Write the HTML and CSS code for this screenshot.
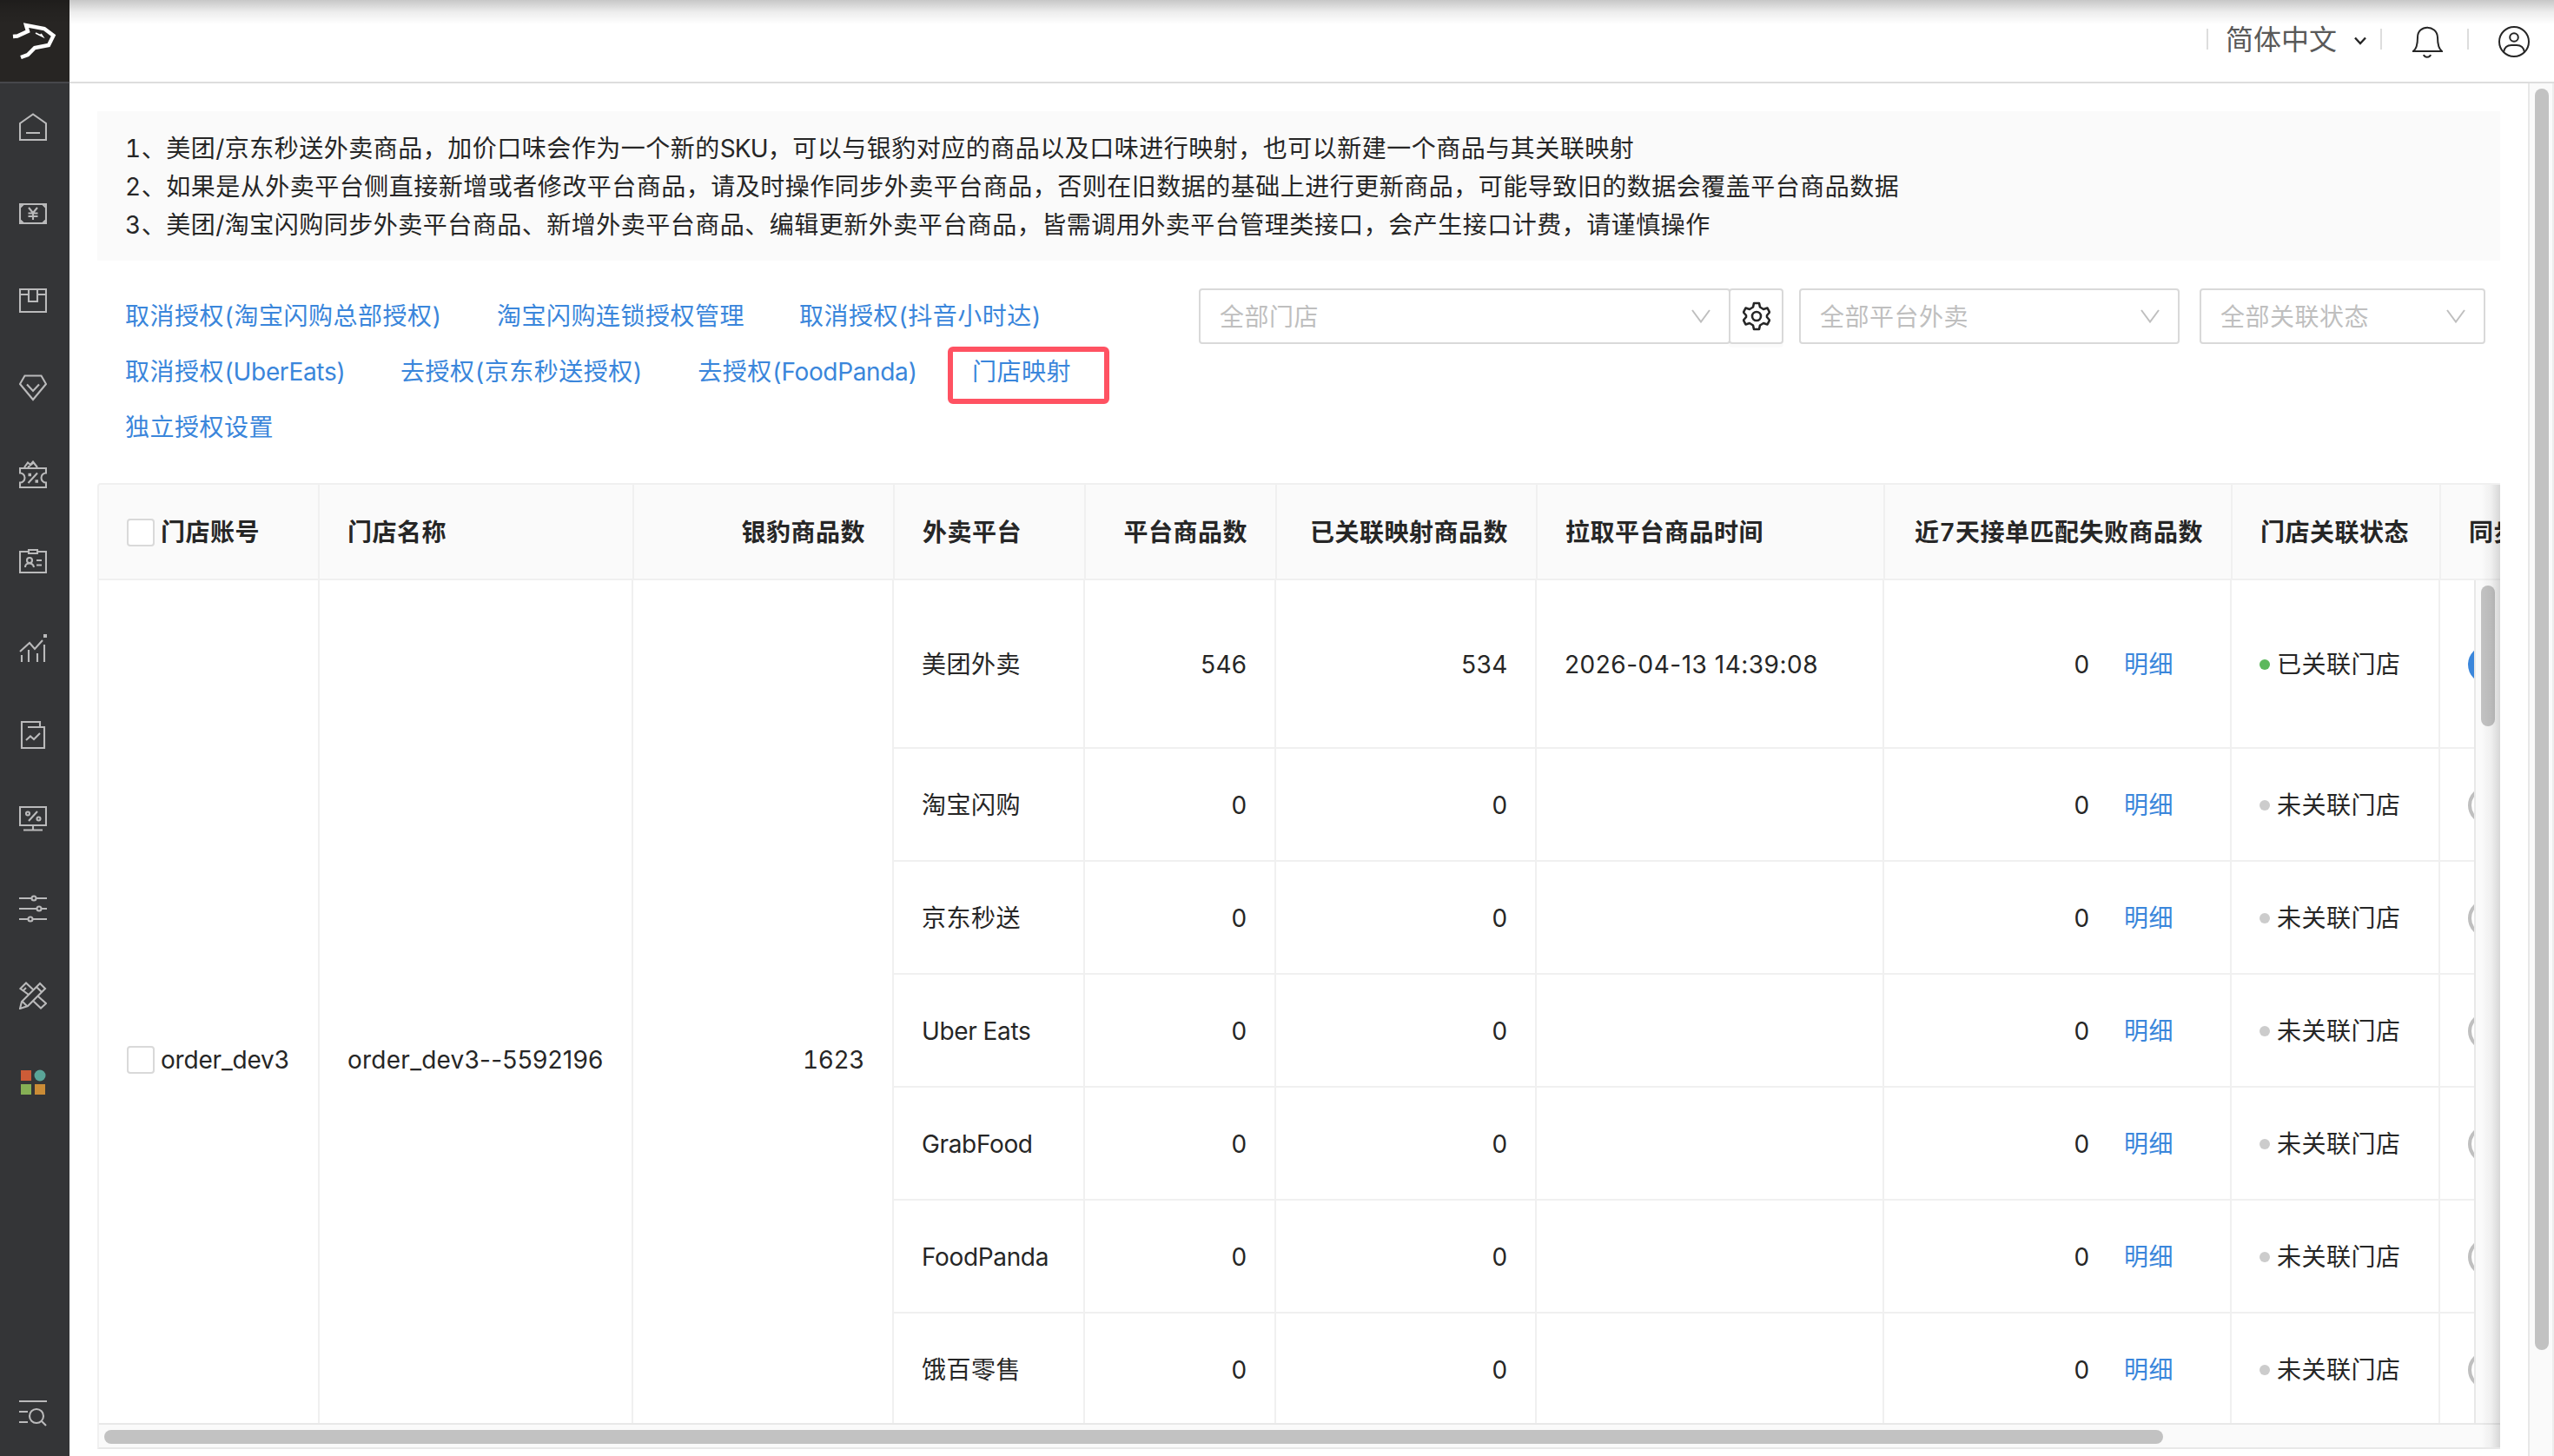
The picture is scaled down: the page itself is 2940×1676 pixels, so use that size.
FILE: index.html
```html
<!DOCTYPE html>
<html lang="zh-CN">
<head>
    <meta charset="UTF-8">
    <meta name="viewport" content="width=device-width, initial-scale=1.0">
    <title>外卖门店映射</title>
    <link rel="stylesheet" href="styles.css">
</head>
<body>
    <div class="top-shade"></div>

    <!-- 侧边栏 -->
    <aside class="sidebar">
        <div class="logo">
            <svg width="52" height="44" viewBox="0 0 52 44" fill="none" stroke="#fff" stroke-width="4.4">
                <path d="M2 18 L7 17.500 L19 12 L17 5 L38 9 L48.500 17 L43 28 L27 31 L19 39 L11 42"/>
                <path d="M28 14 L36 18 L34 15" stroke-width="1.8"/>
            </svg>
        </div>
        <nav class="menu">
            <a class="menu-item"><svg viewBox="0 0 32 32"><path d="M1 31V12L16 1.500 31 12V31ZM8 23H24"/></svg></a>
            <a class="menu-item"><svg viewBox="0 0 32 32"><path d="M1 5H31V27H1ZM1 9 5 5M27 5 31 9M1 23 5 27M27 27 31 23M11 9 16 15 21 9M16 15V23M10.500 15.500H21.500M10.500 19H21.500"/></svg></a>
            <a class="menu-item"><svg viewBox="0 0 32 32"><path d="M1 3H31V29H1ZM1 9H11M21 9H31M11 3V17H21V3"/></svg></a>
            <a class="menu-item"><svg viewBox="0 0 32 32"><path d="M6.500 2.500H25.500L31 12 16 30 1 12ZM9 12.500 16 20 23 12.500"/></svg></a>
            <a class="menu-item"><svg viewBox="0 0 32 32"><path d="M1 9H31V14.500A5 5 0 0 0 31 25.500V31H1V25.500A5 5 0 0 0 1 14.500ZM6 8 10 2.500 13 5 16 1.500 21 8M10 8 16 3M10.500 26 21 14.500"/><path d="M10.500 16.500H14M18.500 24H22" stroke-width="3.500"/></svg></a>
            <a class="menu-item"><svg viewBox="0 0 32 32"><path d="M11 5H1V29H31V5H21M11 3H21V7H11ZM7 23C7 17 16 17 17 23M20 15H26M20 20.500H26"/><circle cx="12" cy="15" r="3"/></svg></a>
            <a class="menu-item"><svg viewBox="0 0 32 32"><path d="M1 20 12 10 18 17 27 7M3 24V32M11 18V32M21 22V32M29 12V32"/><path d="M28 2H32" stroke-width="4"/></svg></a>
            <a class="menu-item"><svg viewBox="0 0 32 32"><path d="M24 7V1H3V31H29V7H10M8 22 13 17.500 17 21 24 14"/></svg></a>
            <a class="menu-item monitor"><svg viewBox="0 0 32 32"><path d="M1 3H31V24H1ZM16 24V29M5 29.500H27M11 19 21 8"/><circle cx="10" cy="10.500" r="2"/><circle cx="22.500" cy="16.500" r="2"/></svg></a>
            <a class="menu-item"><svg viewBox="0 0 32 32"><path d="M0 4H14M20 4H32M0 16H20M26 16H32M0 28H10M16 28H32"/><circle cx="17" cy="4" r="2.500"/><circle cx="23" cy="16" r="2.500"/><circle cx="13" cy="28" r="2.500"/></svg></a>
            <a class="menu-item"><svg viewBox="0 0 32 32"><path d="M1 31 3 23 24 2 30 8 10 28ZM20 6 26 12M4 23 9 28M11 15 1.500 8 8 1.500 16 9M5 10 8 7M22 17 31 25 25 30.500 16 22"/></svg></a>
            <a class="menu-item">
                <svg class="apps" viewBox="0 0 32 32">
                    <rect x="2" y="2" width="12" height="12" fill="#cd5c37"/>
                    <circle cx="24" cy="8" r="6.500" fill="#5aa598"/>
                    <rect x="2" y="18" width="12" height="12" fill="#86b055"/>
                    <rect x="18" y="18" width="12" height="12" fill="#cb8c36"/>
                </svg>
            </a>
        </nav>
        <a class="menu-item menu-search"><svg viewBox="0 0 32 32"><path d="M0 2H32M0 14H10M0 26H10M26 25 31 30"/><circle cx="20" cy="19" r="8"/></svg></a>
    </aside>

    <div class="main">
        <!-- 顶栏 -->
        <header class="header">
            <i class="divider"></i>
            <span class="lang">简体中文</span>
            <svg class="lang-arrow" width="16" height="12" viewBox="0 0 16 12"><path d="M2 2.500 8 9 14 2.500" fill="none" stroke="#262626" stroke-width="2.400"/></svg>
            <i class="divider"></i>
            <svg class="bell" width="36" height="38" viewBox="0 0 36 38" fill="none" stroke="#262626" stroke-width="2">
                <path d="M1 29H35C31 26 30 20 30 13C29 -2 7 -2 7 13C7 20 6 26 2 29M14 33C15 36.500 21 36.500 22 33"/>
            </svg>
            <i class="divider"></i>
            <svg class="user" width="36" height="36" viewBox="0 0 36 36" fill="none" stroke="#262626" stroke-width="2">
                <circle cx="18" cy="18" r="17"/>
                <circle cx="18" cy="13" r="4.800"/>
                <path d="M6 30C7 24 11 22 15 22H21C25 22 29 24 30 30"/>
            </svg>
        </header>

        <div class="page">
            <div class="content">
                <div class="notice">
                    <p>1、美团/京东秒送外卖商品，加价口味会作为一个新的<span class="sku">SKU</span>，可以与银豹对应的商品以及口味进行映射，也可以新建一个商品与其关联映射</p>
                    <p>2、如果是从外卖平台侧直接新增或者修改平台商品，请及时操作同步外卖平台商品，否则在旧数据的基础上进行更新商品，可能导致旧的数据会覆盖平台商品数据</p>
                    <p>3、美团/淘宝闪购同步外卖平台商品、新增外卖平台商品、编辑更新外卖平台商品，皆需调用外卖平台管理类接口，会产生接口计费，请谨慎操作</p>
                </div>

                <!-- 授权链接 + 筛选 -->
                <div class="toolbar">
                    <div class="links">
                        <a>取消授权(淘宝闪购总部授权)</a>
                        <a>淘宝闪购连锁授权管理</a>
                        <a>取消授权(抖音小时达)</a>
                        <a>取消授权<span class="en">(UberEats)</span></a>
                        <a>去授权(京东秒送授权)</a>
                        <a>去授权<span class="en">(FoodPanda)</span></a>
                        <a class="marked">门店映射</a>
                        <a>独立授权设置</a>
                    </div>
                    <div class="filters">
                        <div class="select select-store">
                            <span>全部门店</span>
                            <svg class="arrow" viewBox="0 0 22 16"><path d="M1 1 11 14.500 21 1"/></svg>
                        </div>
                        <button class="gear">
                            <svg width="32" height="34" viewBox="0 0 32 34" fill="none" stroke="#262626" stroke-width="2.600" stroke-linejoin="round">
                                <path d="M13 2H19L20 6.500 24 9 28.500 7.500 31 12.500 28 16V18L31 21.500 28.500 26.500 24 25 20 27.500 19 32H13L12 27.500 8 25 3.500 26.500 1 21.500 4 18V16L1 12.500 3.500 7.500 8 9 12 6.500Z"/>
                                <circle cx="16" cy="17" r="5"/>
                            </svg>
                        </button>
                        <div class="select select-platform">
                            <span>全部平台外卖</span>
                            <svg class="arrow" viewBox="0 0 22 16"><path d="M1 1 11 14.500 21 1"/></svg>
                        </div>
                        <div class="select select-status">
                            <span>全部关联状态</span>
                            <svg class="arrow" viewBox="0 0 22 16"><path d="M1 1 11 14.500 21 1"/></svg>
                        </div>
                    </div>
                </div>

                <!-- 门店表格 -->
                <div class="table-wrap">
                    <div class="table-head">
                        <table class="head-table">
                            <colgroup>
                                <col class="c-account"><col class="c-name"><col class="c-count"><col class="c-platform"><col class="c-goods">
                                <col class="c-mapped"><col class="c-time"><col class="c-fail"><col class="c-status"><col class="c-sync">
                            </colgroup>
                            <tr>
                                <th><span class="check-cell"><i class="checkbox"></i>门店账号</span></th>
                                <th>门店名称</th>
                                <th class="num">银豹商品数</th>
                                <th>外卖平台</th>
                                <th class="num">平台商品数</th>
                                <th class="num">已关联映射商品数</th>
                                <th>拉取平台商品时间</th>
                                <th class="num">近7天接单匹配失败商品数</th>
                                <th>门店关联状态</th>
                                <th>同步</th>
                            </tr>
                        </table>
                    </div>
                    <div class="table-main">
                        <div class="table-body">
                            <table>
                                <colgroup>
                                    <col class="c-account"><col class="c-name"><col class="c-count"><col class="c-platform"><col class="c-goods">
                                    <col class="c-mapped"><col class="c-time"><col class="c-fail"><col class="c-status"><col class="c-sync">
                                </colgroup>
                                <tr class="tall">
                                    <td rowspan="8"><span class="check-cell account"><i class="checkbox"></i>order_dev3</span></td>
                                    <td rowspan="8"><span class="name">order_dev3--5592196</span></td>
                                    <td rowspan="8" class="num">1623</td>
                                    <td>美团外卖</td>
                                    <td class="num">546</td>
                                    <td class="num">534</td>
                                    <td><span class="time">2026-04-13 14:39:08</span></td>
                                    <td class="num fail">0<a>明细</a></td>
                                    <td><span class="status on">已关联门店</span></td>
                                    <td><i class="switch on"></i></td>
                                </tr>
                                <tr>
                                    <td>淘宝闪购</td><td class="num">0</td><td class="num">0</td><td></td>
                                    <td class="num fail">0<a>明细</a></td>
                                    <td><span class="status">未关联门店</span></td>
                                    <td><i class="switch"></i></td>
                                </tr>
                                <tr>
                                    <td>京东秒送</td><td class="num">0</td><td class="num">0</td><td></td>
                                    <td class="num fail">0<a>明细</a></td>
                                    <td><span class="status">未关联门店</span></td>
                                    <td><i class="switch"></i></td>
                                </tr>
                                <tr>
                                    <td><span class="en">Uber Eats</span></td><td class="num">0</td><td class="num">0</td><td></td>
                                    <td class="num fail">0<a>明细</a></td>
                                    <td><span class="status">未关联门店</span></td>
                                    <td><i class="switch"></i></td>
                                </tr>
                                <tr>
                                    <td><span class="en">GrabFood</span></td><td class="num">0</td><td class="num">0</td><td></td>
                                    <td class="num fail">0<a>明细</a></td>
                                    <td><span class="status">未关联门店</span></td>
                                    <td><i class="switch"></i></td>
                                </tr>
                                <tr>
                                    <td><span class="en">FoodPanda</span></td><td class="num">0</td><td class="num">0</td><td></td>
                                    <td class="num fail">0<a>明细</a></td>
                                    <td><span class="status">未关联门店</span></td>
                                    <td><i class="switch"></i></td>
                                </tr>
                                <tr>
                                    <td>饿百零售</td><td class="num">0</td><td class="num">0</td><td></td>
                                    <td class="num fail">0<a>明细</a></td>
                                    <td><span class="status">未关联门店</span></td>
                                    <td><i class="switch"></i></td>
                                </tr>
                                <tr>
                                    <td></td><td></td><td></td><td></td><td></td><td></td><td></td>
                                </tr>
                            </table>
                        </div>
                        <div class="scroll-y"><i></i></div>
                    </div>
                    <div class="scroll-x"><i></i></div>
                    <div class="edge-shadow"></div>
                </div>
            </div>
            <div class="page-scroll"><i></i></div>
        </div>
    </div>
</body>
</html>
```
FILE: styles.css
```css
*,
*::before,
*::after {
    margin: 0;
    padding: 0;
    box-sizing: border-box;
}

body {
    display: flex;
    width: 2940px;
    height: 1676px;
    overflow: hidden;
    background: #fff;
    color: #262626;
    font-family: Inter, "Noto Sans CJK SC", sans-serif;
    font-size: 28px;
    font-variant-numeric: tabular-nums;
    line-height: 44px;
    letter-spacing: 0.5px;
}

a {
    color: #3a86db;
}

svg {
    display: block;
}

.en {
    letter-spacing: -0.35px;
}

.account {
    letter-spacing: -0.2px;
}

.sku {
    letter-spacing: -0.9px;
}

.name,
.time {
    font-variant-numeric: normal;
}

.name {
    letter-spacing: 0.25px;
}

/* 页面顶部的阴影 */
.top-shade {
    position: absolute;
    top: 0;
    left: 0;
    width: 100%;
    height: 28px;
    background: linear-gradient(rgba(0, 0, 0, 0.22), rgba(0, 0, 0, 0.07) 50%, rgba(0, 0, 0, 0));
}

/* 侧边栏 */
.sidebar {
    display: flex;
    flex-direction: column;
    width: 80px;
    height: 1676px;
    background: #343537;
}

.logo {
    height: 96px;
    padding: 24px 0 0 13px;
    background: #272523;
    border-bottom: 2px solid #47484b;
}

.menu {
    flex: 1;
}

.menu-item {
    display: flex;
    align-items: center;
    height: 100px;
    padding-left: 22px;
}

.menu-item svg {
    width: 32px;
    height: 32px;
    fill: none;
    stroke: #bababb;
    stroke-width: 2.1;
}

.menu-item .apps {
    stroke: none;
}

.menu-item.monitor {
    padding-bottom: 8px;
}

.menu-search {
    height: 98px;
}

/* 顶栏 */
.main {
    flex: 1;
    display: flex;
    flex-direction: column;
}

.header {
    display: flex;
    align-items: center;
    justify-content: flex-end;
    height: 96px;
    padding: 0 28px 4px 0;
    border-bottom: 2px solid #ddd;
}

.divider {
    width: 2px;
    height: 24px;
    background: #ddd;
}

.lang {
    margin: 2px 19px 0 20px;
    color: #595959;
    font-size: 32px;
    letter-spacing: 0;
}

.lang-arrow {
    margin: 4px 15px 0 0;
}

.bell {
    margin: 8px 28px 0 34px;
}

.user {
    margin: 6px 0 0 34px;
}

/* 内容区 */
.page {
    flex: 1;
    display: flex;
}

.content {
    width: 2830px;
    padding: 32px 32px 0;
}

.notice {
    height: 172px;
    padding: 21px 32px 0;
    background: #fafafa;
}

.toolbar {
    display: flex;
    height: 224px;
    margin-bottom: 32px;
    padding: 32px 17px 0 32px;
}

.links {
    display: flex;
    flex-wrap: wrap;
    align-content: flex-start;
    width: 1236px;
    column-gap: 63px;
}

.links a {
    position: relative;
    height: 64px;
    line-height: 65px;
}

.links .marked::after {
    content: "";
    position: absolute;
    top: 3px;
    left: -28px;
    width: 186px;
    height: 66px;
    border: 6px solid #ff5262;
    border-radius: 6px;
}

.filters {
    flex: 1;
    display: flex;
    align-items: flex-start;
}

.select {
    display: flex;
    align-items: center;
    justify-content: space-between;
    height: 64px;
    padding: 0 21px 0 22px;
    border: 2px solid #d9d9d9;
    border-radius: 4px;
    color: #bfbfbf;
    line-height: 60px;
}

.select span {
    padding-top: 1px;
}

.arrow {
    width: 22px;
    height: 16px;
    fill: none;
    stroke: #bfbfbf;
    stroke-width: 2;
}

.select-store {
    width: 612px;
}

.select-platform {
    width: 438px;
    margin: 0 23px 0 18px;
}

.select-status {
    width: 329px;
}

.gear {
    display: flex;
    align-items: center;
    justify-content: center;
    width: 63px;
    height: 64px;
    margin-left: -2px;
    background: #fff;
    border: 2px solid #d9d9d9;
    border-radius: 4px;
    box-shadow: 0 4px 0 rgba(0, 0, 0, 0.015);
}

/* 表格 */
.table-wrap {
    position: relative;
    width: 2766px;
    height: 1112px;
    border-top: 2px solid #f0f0f0;
    border-left: 2px solid #f0f0f0;
    border-bottom: 2px solid #e8e8e8;
    border-radius: 4px 0 0 0;
    overflow: hidden;
}

.table-head {
    overflow: hidden;
}

table {
    table-layout: fixed;
    width: 2994px;
    border-collapse: separate;
    border-spacing: 0;
}

.c-account { width: 254px; }
.c-name { width: 361px; }
.c-count { width: 300px; }
.c-platform { width: 220px; }
.c-goods { width: 220px; }
.c-mapped { width: 300px; }
.c-time { width: 400px; }
.c-fail { width: 400px; }
.c-status { width: 240px; }
.c-sync { width: 299px; }

.head-table {
    width: 2995px;
}

.head-table .c-name {
    width: 362px;
}

th,
td {
    padding: 1px 32px 0;
    text-align: left;
    white-space: nowrap;
    border-right: 2px solid #f0f0f0;
    border-bottom: 2px solid #f0f0f0;
}

th {
    height: 110px;
    background: #fafafa;
    font-weight: 600;
}

td {
    height: 130px;
}

.tall td {
    height: 194px;
}

.num {
    text-align: right;
}

td.num {
    letter-spacing: -0.4px;
}

td.fail {
    padding-right: 65px;
}

.fail a {
    margin-left: 40px;
    letter-spacing: 0.5px;
}

.check-cell {
    display: flex;
    align-items: center;
}

.checkbox {
    flex-shrink: 0;
    width: 32px;
    height: 32px;
    margin-right: 7px;
    background: #fff;
    border: 2px solid #d9d9d9;
    border-radius: 4px;
}

.status {
    display: flex;
    align-items: center;
}

.status::before {
    content: "";
    width: 12px;
    height: 12px;
    margin-right: 8px;
    border-radius: 50%;
    background: #ccc;
}

.status.on::before {
    background: #5cb85c;
}

.switch {
    display: block;
    width: 88px;
    height: 44px;
    border: 4px solid #bfbfbf;
    border-radius: 22px;
}

.switch.on {
    background: #3a86db;
    border: none;
}

.table-main {
    display: flex;
    height: 972px;
    border-bottom: 2px solid #e8e8e8;
}

.table-body {
    width: 2734px;
    height: 970px;
    overflow: hidden;
}

/* 滚动条 */
.scroll-y {
    width: 30px;
    padding: 6px;
    background: #fafafa;
    border-left: 2px solid #e8e8e8;
}

.scroll-y i {
    display: block;
    width: 16px;
    height: 162px;
    border-radius: 8px;
    background: #c2c2c2;
}

.scroll-x {
    height: 26px;
    padding: 6px;
    background: #fafafa;
}

.scroll-x i {
    display: block;
    width: 2370px;
    height: 16px;
    border-radius: 8px;
    background: #c2c2c2;
}

.edge-shadow {
    position: absolute;
    top: -2px;
    right: 0;
    width: 22px;
    height: 1112px;
    background: linear-gradient(to right, rgba(0, 0, 0, 0), rgba(0, 0, 0, 0.04) 50%, rgba(0, 0, 0, 0.14));
}

.page-scroll {
    width: 30px;
    padding: 6px;
    background: #fafafa;
    border-left: 2px solid #e8e8e8;
    border-right: 2px solid #ededed;
}

.page-scroll i {
    display: block;
    width: 16px;
    height: 1452px;
    border-radius: 8px;
    background: #c2c2c2;
}
```
